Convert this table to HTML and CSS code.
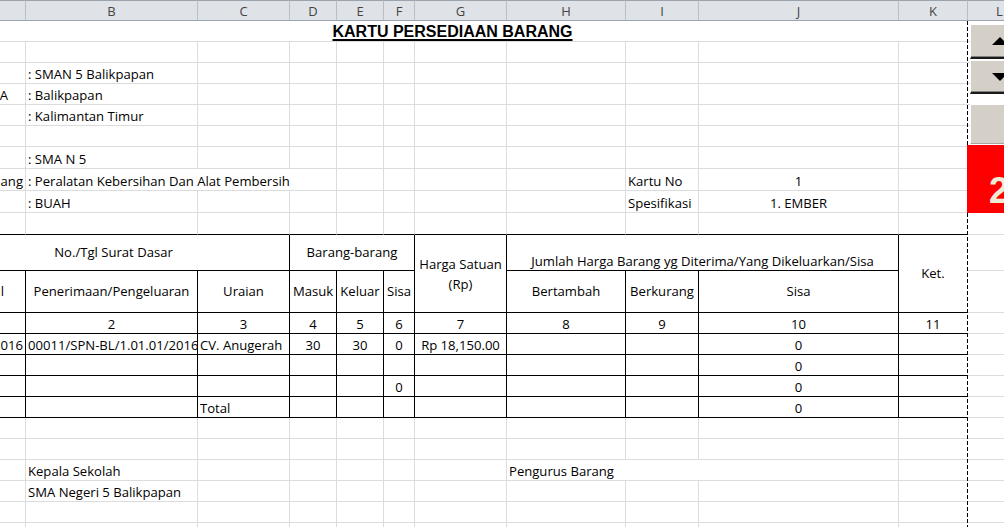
FILE: index.html
```html
<!DOCTYPE html>
<html lang="id">
<head>
<meta charset="utf-8">
<title>Kartu Persediaan Barang</title>
<link rel="stylesheet" href="styles.css">
</head>
<body>
<div class="screen">
  <div class="sheet">
    <!-- column headers (column A is scrolled off to the left) -->
    <div class="ch"></div><div class="ch">B</div><div class="ch">C</div><div class="ch">D</div><div class="ch">E</div><div class="ch">F</div><div class="ch">G</div><div class="ch">H</div><div class="ch">I</div><div class="ch">J</div><div class="ch">K</div><div class="ch">L</div>

    <!-- row 1 -->
    <div class="c k s11 title">KARTU PERSEDIAAN BARANG</div><div class="c l"></div>
    <!-- row 2 -->
    <div class="c"></div><div class="c"></div><div class="c"></div><div class="c"></div><div class="c"></div><div class="c"></div><div class="c"></div><div class="c"></div><div class="c"></div><div class="c"></div><div class="c k"></div><div class="c l"></div>
    <!-- row 3 -->
    <div class="c"></div><div class="c">: SMAN 5 Balikpapan</div><div class="c"></div><div class="c"></div><div class="c"></div><div class="c"></div><div class="c"></div><div class="c"></div><div class="c"></div><div class="c"></div><div class="c k"></div><div class="c l"></div>
    <!-- row 4 -->
    <div class="c frag pr17">A</div><div class="c">: Balikpapan</div><div class="c"></div><div class="c"></div><div class="c"></div><div class="c"></div><div class="c"></div><div class="c"></div><div class="c"></div><div class="c"></div><div class="c k"></div><div class="c l"></div>
    <!-- row 5 -->
    <div class="c"></div><div class="c">: Kalimantan Timur</div><div class="c"></div><div class="c"></div><div class="c"></div><div class="c"></div><div class="c"></div><div class="c"></div><div class="c"></div><div class="c"></div><div class="c k"></div><div class="c l"></div>
    <!-- row 6 -->
    <div class="c"></div><div class="c"></div><div class="c"></div><div class="c"></div><div class="c"></div><div class="c"></div><div class="c"></div><div class="c"></div><div class="c"></div><div class="c"></div><div class="c k"></div><div class="c l"></div>
    <!-- row 7 -->
    <div class="c"></div><div class="c">: SMA N 5</div><div class="c"></div><div class="c"></div><div class="c"></div><div class="c"></div><div class="c"></div><div class="c"></div><div class="c"></div><div class="c"></div><div class="c k"></div><div class="c l"></div>
    <!-- row 8 -->
    <div class="c frag pr2">ang</div><div class="c s3">: Peralatan Kebersihan Dan Alat Pembersih</div><div class="c"></div><div class="c"></div><div class="c"></div><div class="c"></div><div class="c">Kartu No</div><div class="c ctr">1</div><div class="c k"></div><div class="c l"></div>
    <!-- row 9 -->
    <div class="c"></div><div class="c">: BUAH</div><div class="c"></div><div class="c"></div><div class="c"></div><div class="c"></div><div class="c"></div><div class="c"></div><div class="c">Spesifikasi</div><div class="c ctr">1. EMBER</div><div class="c k"></div><div class="c l"></div>
    <!-- row 10 -->
    <div class="c bt"></div><div class="c bt"></div><div class="c bt"></div><div class="c bt"></div><div class="c bt"></div><div class="c bt"></div><div class="c bt"></div><div class="c bt"></div><div class="c bt"></div><div class="c bt"></div><div class="c k bt"></div><div class="c l"></div>

    <!-- table header row 1 -->
    <div class="c t s3 ctr mid">No./Tgl Surat Dasar</div>
    <div class="c t s3 ctr mid">Barang-barang</div>
    <div class="c t r2 ctr mid wrap">Harga Satuan (Rp)</div>
    <div class="c t s3 ctr">Jumlah Harga Barang yg Diterima/Yang Dikeluarkan/Sisa</div>
    <div class="c tk r2 ctr mid">Ket.</div>
    <div class="c l"></div>
    <!-- table header row 2 -->
    <div class="c t frag mid pr21">l</div>
    <div class="c t ctr mid">Penerimaan/Pengeluaran</div>
    <div class="c t ctr mid">Uraian</div>
    <div class="c t ctr mid">Masuk</div>
    <div class="c t ctr mid">Keluar</div>
    <div class="c t ctr mid">Sisa</div>
    <div class="c t ctr mid">Bertambah</div>
    <div class="c t ctr mid">Berkurang</div>
    <div class="c t ctr mid">Sisa</div>
    <div class="c l"></div>
    <!-- numbering row -->
    <div class="c t"></div><div class="c t ctr">2</div><div class="c t ctr">3</div><div class="c t ctr">4</div><div class="c t ctr">5</div><div class="c t ctr">6</div><div class="c t ctr">7</div><div class="c t ctr">8</div><div class="c t ctr">9</div><div class="c t ctr">10</div><div class="c tk ctr">11</div><div class="c l"></div>
    <!-- data row 1 -->
    <div class="c t frag pr2">016</div><div class="c t">00011/SPN-BL/1.01.01/2016</div><div class="c t">CV. Anugerah</div><div class="c t ctr">30</div><div class="c t ctr">30</div><div class="c t ctr">0</div><div class="c t ctr">Rp 18,150.00</div><div class="c t"></div><div class="c t"></div><div class="c t ctr">0</div><div class="c tk"></div><div class="c l"></div>
    <!-- data row 2 -->
    <div class="c t"></div><div class="c t"></div><div class="c t"></div><div class="c t"></div><div class="c t"></div><div class="c t"></div><div class="c t"></div><div class="c t"></div><div class="c t"></div><div class="c t ctr">0</div><div class="c tk"></div><div class="c l"></div>
    <!-- data row 3 -->
    <div class="c t"></div><div class="c t"></div><div class="c t"></div><div class="c t"></div><div class="c t"></div><div class="c t ctr">0</div><div class="c t"></div><div class="c t"></div><div class="c t"></div><div class="c t ctr">0</div><div class="c tk"></div><div class="c l"></div>
    <!-- total row -->
    <div class="c t"></div><div class="c t"></div><div class="c t">Total</div><div class="c t"></div><div class="c t"></div><div class="c t"></div><div class="c t"></div><div class="c t"></div><div class="c t"></div><div class="c t ctr">0</div><div class="c tk"></div><div class="c l"></div>

    <!-- row 18 -->
    <div class="c"></div><div class="c"></div><div class="c"></div><div class="c"></div><div class="c"></div><div class="c"></div><div class="c"></div><div class="c"></div><div class="c"></div><div class="c"></div><div class="c k"></div><div class="c l"></div>
    <!-- row 19 -->
    <div class="c"></div><div class="c"></div><div class="c"></div><div class="c"></div><div class="c"></div><div class="c"></div><div class="c"></div><div class="c"></div><div class="c"></div><div class="c"></div><div class="c k"></div><div class="c l"></div>
    <!-- row 20 -->
    <div class="c"></div><div class="c">Kepala Sekolah</div><div class="c"></div><div class="c"></div><div class="c"></div><div class="c"></div><div class="c"></div><div class="c s3">Pengurus Barang</div><div class="c k"></div><div class="c l"></div>
    <!-- row 21 -->
    <div class="c"></div><div class="c">SMA Negeri 5 Balikpapan</div><div class="c"></div><div class="c"></div><div class="c"></div><div class="c"></div><div class="c"></div><div class="c"></div><div class="c"></div><div class="c"></div><div class="c k"></div><div class="c l"></div>
    <!-- row 22 -->
    <div class="c"></div><div class="c"></div><div class="c"></div><div class="c"></div><div class="c"></div><div class="c"></div><div class="c"></div><div class="c"></div><div class="c"></div><div class="c"></div><div class="c k"></div><div class="c l"></div>
    <!-- row 23 -->
    <div class="c"></div><div class="c"></div><div class="c"></div><div class="c"></div><div class="c"></div><div class="c"></div><div class="c"></div><div class="c"></div><div class="c"></div><div class="c"></div><div class="c k"></div><div class="c l"></div>
  </div>

  <div class="pagebreak"></div>
  <div class="btn btn-up"><span class="tri-up"></span></div>
  <div class="btn btn-down"><span class="tri-down"></span></div>
  <div class="btn btn-plain"></div>
  <div class="badge">2</div>
</div>
</body>
</html>
```
FILE: styles.css
```css
* { box-sizing: border-box; }

html, body {
  margin: 0;
  padding: 0;
}

body {
  width: 1004px;
  height: 527px;
  overflow: hidden;
  background: #ffffff;
  font-family: "Open Sans", "Noto Sans", sans-serif;
  font-size: 13.1px;
  color: #000;
}

.screen {
  position: relative;
  width: 1004px;
  height: 527px;
  overflow: hidden;
}

.sheet {
  display: grid;
  margin-left: -62px;
  width: 1094px;
  grid-template-columns: 88px 172px 92px 47px 47px 31px 92px 119px 73px 200px 69px 64px;
  grid-template-rows: 21px repeat(6, 21px) repeat(4, 22px) 36px 42px repeat(11, 21px);
}

/* column header */
.ch {
  background: #dfe3e8;
  border-top: 1px solid #9ba3ac;
  border-right: 1px solid #b7bec6;
  border-bottom: 1px solid #9ba3ac;
  display: flex;
  align-items: center;
  justify-content: center;
  color: #444;
  font-size: 13px;
  line-height: 16px;
}

/* cells */
.c {
  border-right: 1px solid #dadcdd;
  border-bottom: 1px solid #dadcdd;
  display: flex;
  align-items: flex-end;
  padding: 0 2px;
  line-height: 17px;
  white-space: nowrap;
  overflow: hidden;
}

.ctr { justify-content: center; }
.mid { align-items: center; }
.frag { justify-content: flex-end; padding-left: 0; }
.pr2 { padding-right: 2px; }
.pr17 { padding-right: 17px; }
.pr21 { padding-right: 21px; }

.t { border-right-color: #000; border-bottom-color: #000; }
.tk { border-bottom-color: #000; border-right-color: transparent; }
.k { border-right-color: transparent; }
.bt { border-bottom-color: #000; }
.l { border-right: none; }

.s3 { grid-column: span 3; }
.s11 { grid-column: span 11; }
.r2 { grid-row: span 2; }

.wrap {
  white-space: normal;
  text-align: center;
  line-height: 20px;
}

.title {
  justify-content: center;
  padding: 0;
  font-family: "Liberation Sans", Arial, sans-serif;
  font-weight: bold;
  font-size: 16px;
  line-height: 19px;
  text-decoration: underline;
  text-decoration-thickness: 2px;
  text-underline-offset: 2px;
}

/* page break marker */
.pagebreak {
  position: absolute;
  left: 967px;
  top: 21px;
  width: 1px;
  height: 506px;
  background: repeating-linear-gradient(to bottom, #000 0 4px, transparent 4px 6px);
}

/* floating form buttons */
.btn {
  position: absolute;
  left: 970px;
  width: 58px;
  background: #d4d0c8;
  border-top: 1px solid #ffffff;
  border-left: 1px solid #ffffff;
  border-bottom: 2px solid #1a1a1a;
  box-shadow: inset 0 -1px 0 #808080;
  display: flex;
  align-items: center;
  justify-content: center;
}

.btn-up { top: 24px; height: 35px; }
.btn-down { top: 60px; height: 34px; }
.btn-plain {
  top: 104px;
  height: 40px;
  border-bottom: 1px solid #a9a59c;
  box-shadow: none;
}

.tri-up {
  width: 0;
  height: 0;
  border-left: 8px solid transparent;
  border-right: 8px solid transparent;
  border-bottom: 8px solid #000;
}

.tri-down {
  width: 0;
  height: 0;
  border-left: 8px solid transparent;
  border-right: 8px solid transparent;
  border-top: 8px solid #000;
}

.badge {
  position: absolute;
  left: 967px;
  top: 145px;
  width: 45px;
  height: 68px;
  background: #ff0000;
  color: #eeecd6;
  font-family: "Liberation Sans", Arial, sans-serif;
  font-weight: bold;
  font-size: 36px;
  line-height: 36px;
  padding: 28px 0 0 22px;
}
```
